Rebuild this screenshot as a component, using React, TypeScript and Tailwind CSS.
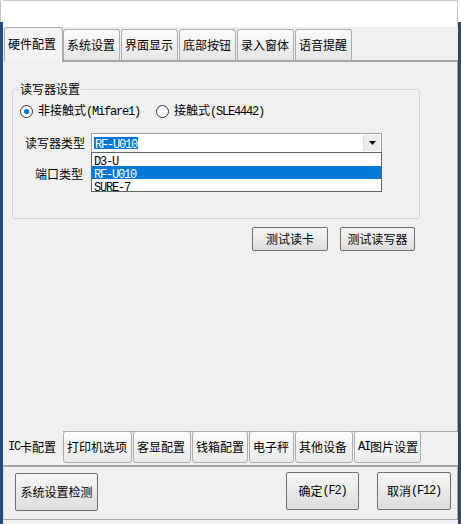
import React from "react";

const Mono = ({ children }: { children: React.ReactNode }) => (
  <span className="font-['Liberation_Mono',monospace] tracking-[-1.2px]">{children}</span>
);

const Btn = ({ className, children }: { className: string; children: React.ReactNode }) => (
  <div
    className={`flex items-center justify-center border border-[#707070] rounded-[2px] bg-linear-to-b from-[#f7f7f7] to-[#dddddd] shrink-0 ${className}`}
  >
    {children}
  </div>
);

const Radio = ({ checked }: { checked?: boolean }) => (
  <div className="w-[13px] h-[13px] rounded-full border border-[#333333] bg-white flex items-center justify-center shrink-0">
    {checked && <div className="w-[5px] h-[5px] rounded-full bg-[#0a68cc]" />}
  </div>
);

const App = () => {
    const topTabs = ["系统设置", "界面显示", "底部按钮", "录入窗体", "语音提醒"];
    const bottomTabs = [
        { key: "print", w: "w-[69px]", label: <>打印机选项</> },
        { key: "disp", w: "w-[58px]", label: <>客显配置</> },
        { key: "box", w: "w-[56px]", label: <>钱箱配置</> },
        { key: "scale", w: "w-[45px]", label: <>电子秤</> },
        { key: "other", w: "w-[58px]", label: <>其他设备</> },
        { key: "ai", w: "w-[67px]", label: <><Mono>AI</Mono>图片设置</> },
    ];
    const readers = ["D3-U", "RF-U010", "SURE-7"];

    return (
        <div className="w-[461px] h-[524px] flex bg-[#f0f0f0] overflow-hidden font-['Noto_Sans_CJK_SC',sans-serif] text-[12px] leading-[14px] text-black">
            {/* desktop edge, left */}
            <div className="w-[3px] flex flex-col shrink-0">
                <div className="h-[22px] bg-white border-l border-[#c4c4c4]" />
                <div className="flex-1 bg-[#2b4a72]" />
            </div>

            <div className="w-[455px] flex flex-col shrink-0">
                <div className="h-[27px] bg-white border-t border-r border-[#c8c8c8] shrink-0" />

                {/* top tabs */}
                <div className="h-[33px] flex items-end shrink-0">
                    <div className="ml-[1px] w-[59px] h-[35px] -mb-[2px] relative z-10 border border-b-0 border-[#acacac] rounded-t-[3px] bg-[#f3f3f3] flex items-center pl-[3px] pb-[2px]">
                        硬件配置
                    </div>
                    {topTabs.map((t) => (
                        <div
                            key={t}
                            className="w-[57px] h-[31px] mr-[1px] border border-b-0 border-[#acacac] rounded-t-[3px] bg-linear-to-b from-[#fcfcfc] to-[#e6e6e6] flex items-center pl-[3px]"
                        >
                            {t}
                        </div>
                    ))}
                </div>

                {/* top panel */}
                <div className="ml-[1px] w-[454px] h-[372px] border-t-2 border-r border-b border-[#a5a5a5] shrink-0 flex flex-col">
                    <fieldset className="ml-[8px] mt-[20px] w-[408px] h-[137px] border border-[#d2d2d2] rounded-[3px] flex flex-col">
                        <legend className="ml-[6px] px-[1px] leading-[14px]">读写器设置</legend>

                        <div className="mt-[8px] h-[14px] flex items-center">
                            <div className="ml-[7px]">
                                <Radio checked />
                            </div>
                            <span className="ml-[5px]">
                                非接触式<Mono>(Mifare1)</Mono>
                            </span>
                            <div className="ml-[16px]">
                                <Radio />
                            </div>
                            <span className="ml-[5px]">
                                接触式<Mono>(SLE4442)</Mono>
                            </span>
                        </div>

                        <div className="mt-[15px] h-[20px] flex items-center">
                            <span className="ml-[12px] w-[60px]">读写器类型</span>
                            <div className="ml-[6px] w-[291px] h-[20px] border border-[#a0a0a0] bg-white relative flex items-center">
                                <span className="ml-[2px] px-[1px] h-[12px] leading-[12px] bg-[#0078d7] text-white">
                                    <Mono>RF-U010</Mono>
                                </span>
                                <div className="absolute right-[1px] top-[1px] w-[17px] h-[16px] bg-[#ececec] border-l border-[#dadada] flex items-center justify-center">
                                    <svg width="7" height="4" viewBox="0 0 7 4">
                                        <path d="M0 0h7L3.5 4z" fill="#000" />
                                    </svg>
                                </div>
                                {/* open dropdown list */}
                                <div className="absolute -left-[1px] top-[18px] w-[291px] h-[40px] border border-[#646464] bg-white z-20 flex flex-col">
                                    {readers.map((r) => (
                                        <div
                                            key={r}
                                            className={`h-[13px] leading-[13px] pl-[2px] ${r === "RF-U010" ? "bg-[#0078d7] text-white" : ""}`}
                                        >
                                            <Mono>{r}</Mono>
                                        </div>
                                    ))}
                                </div>
                            </div>
                        </div>

                        <div className="mt-[14px] h-[14px] flex items-center">
                            <span className="ml-[22px]">端口类型</span>
                        </div>
                    </fieldset>

                    <div className="mt-[8px] ml-[248px] flex">
                        <Btn className="w-[76px] h-[24px]">测试读卡</Btn>
                        <Btn className="ml-[12px] w-[75px] h-[24px]">测试读写器</Btn>
                    </div>
                </div>

                {/* bottom tabs */}
                <div className="-mt-[1px] h-[34px] flex items-start shrink-0">
                    <div className="ml-[1px] w-[59px] h-[34px] relative z-10 bg-[#f0f0f0] flex items-center pl-[4px] pb-[2px]">
                        <Mono>IC</Mono>卡配置
                    </div>
                    {bottomTabs.map((t) => (
                        <div
                            key={t.key}
                            className={`${t.w} h-[32px] mr-[1px] border border-[#acacac] rounded-[3px] bg-linear-to-b from-[#fdfdfd] to-[#ebebeb] flex items-center pl-[3px]`}
                        >
                            {t.label}
                        </div>
                    ))}
                </div>

                {/* bottom panel */}
                <div className="w-[455px] h-[55px] border-t-2 border-x border-b border-[#a5a5a5] border-l-[#d8d8d8] shrink-0 flex items-start">
                    <Btn className="ml-[11px] mt-[6px] w-[83px] h-[38px]">系统设置检测</Btn>
                    <Btn className="ml-[188px] mt-[5px] w-[73px] h-[38px]">
                        确定<Mono>(F2)</Mono>
                    </Btn>
                    <Btn className="ml-[18px] mt-[5px] w-[74px] h-[38px]">
                        取消<Mono>(F12)</Mono>
                    </Btn>
                </div>
            </div>

            {/* desktop edge, right */}
            <div className="w-[3px] flex flex-col shrink-0">
                <div className="h-[22px] bg-white" />
                <div className="flex-1 bg-[#2b4a72]" />
            </div>
        </div>
    );
};

export default App;
